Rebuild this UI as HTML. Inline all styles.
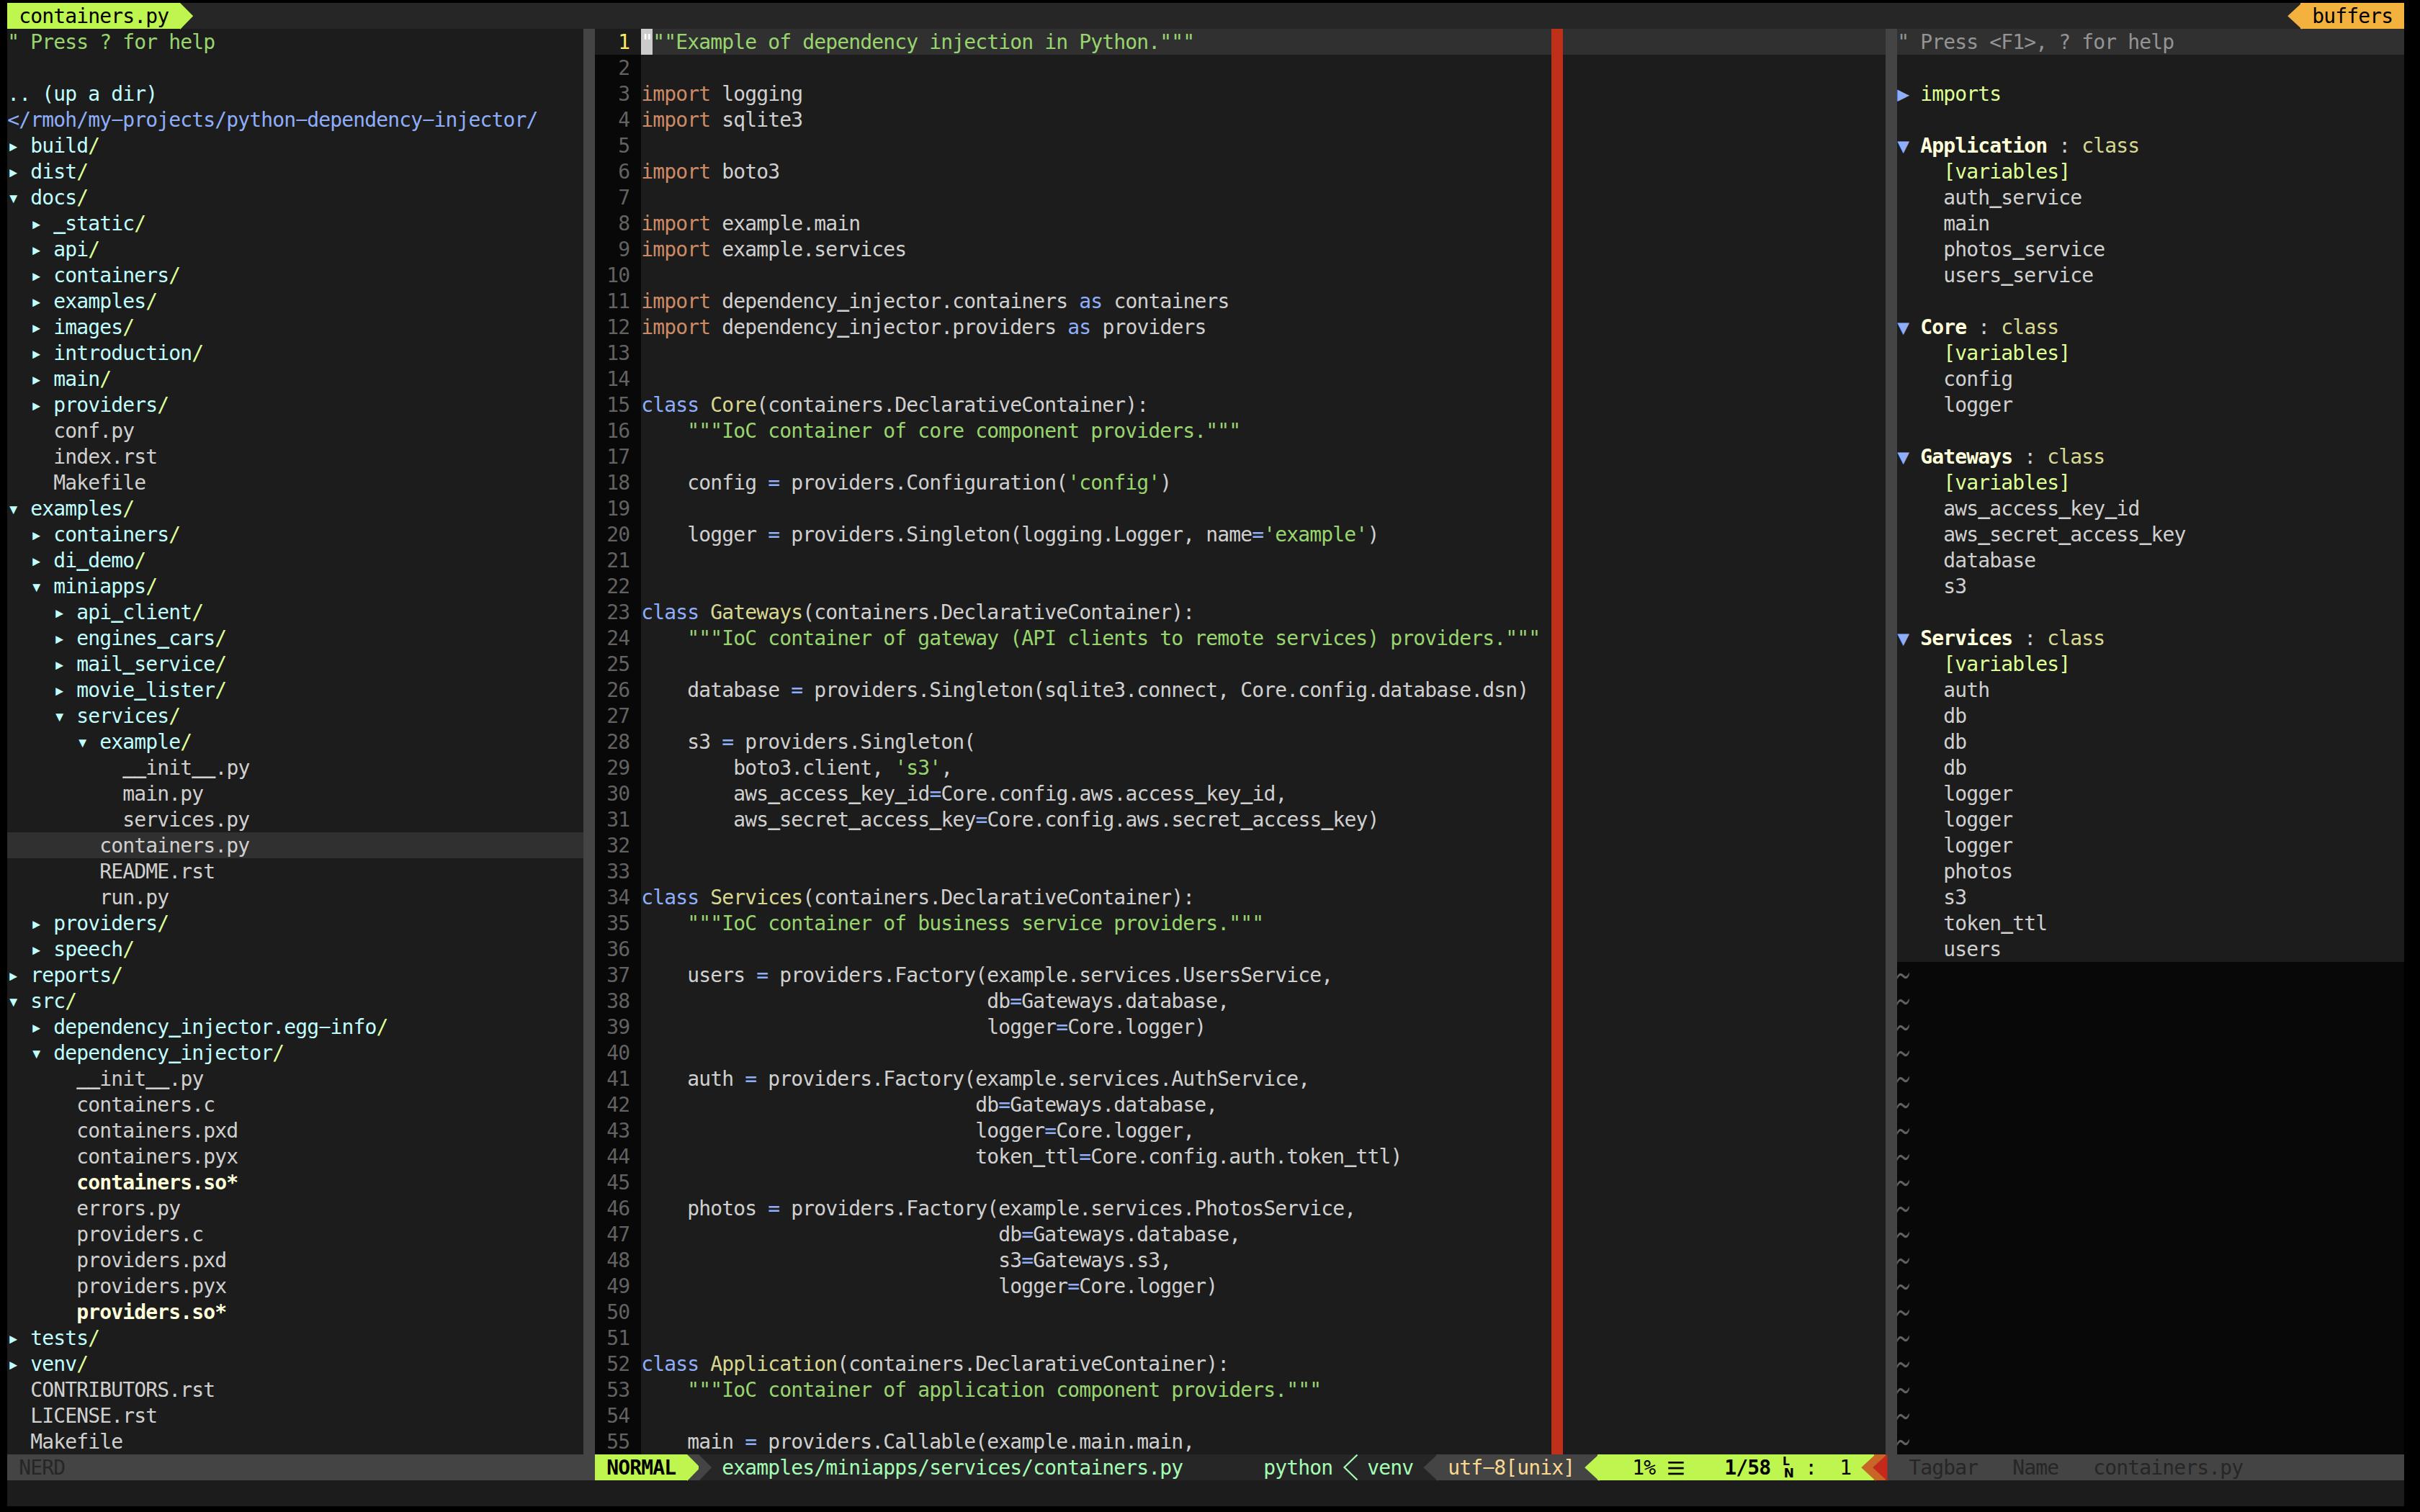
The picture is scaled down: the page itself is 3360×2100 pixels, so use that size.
<!DOCTYPE html>
<html lang="en"><head><meta charset="utf-8"><title>containers.py - vim</title>
<style>
html,body{margin:0;padding:0;background:#000;}
body{width:3360px;height:2100px;overflow:hidden;position:relative;}
#t{position:absolute;left:10px;top:4px;width:3328px;height:2088px;background:#1c1c1c;overflow:hidden;
 font-family:"DejaVu Sans Mono","Liberation Mono",monospace;font-size:28px;line-height:36px;letter-spacing:-0.8574px;color:#d0d0d0;-webkit-text-stroke:0;}
.b{position:absolute;display:block;overflow:visible}
pre.w{position:absolute;margin:0;padding:0;font:inherit;letter-spacing:inherit;white-space:pre;color:inherit}
.h,.g{color:#99d56f}.d{color:#c0fdfe}.s{color:#8faef9}.i{color:#dffe96}
.x,.t{color:#ffffdb;font-weight:bold}.p{color:#cc8b66}.y{color:#d7d791}.c{color:#949494}
pre.l,.l{color:#626262}.cn{color:#fcec64}.cc{color:#fff}
pre.k{color:#000}pre.bd{font-weight:bold}pre.ia{color:#262626}pre.tf{color:#a5fcb6}pre.bl{color:#f9d892}
.u,.hy{display:inline-block;font-style:normal}
.u{transform-origin:50% 33.4px;transform:translateY(-1.8px) scaleY(2.3)}
.hy{transform-origin:50% 20px;transform:translateY(-0.9px) scale(2.1,0.9)}
pre.tri{font-family:"DejaVu Sans",sans-serif;letter-spacing:0;font-size:24.4px;line-height:30px;transform-origin:0 0;transform:scaleX(1.18);-webkit-text-stroke:0.3px}
pre.ln1,pre.ln2{font-family:"DejaVu Sans",sans-serif;font-weight:bold;letter-spacing:0;line-height:20px;-webkit-text-stroke:0}
pre.ln1{font-size:15.4px}pre.ln2{font-size:16.9px}
.td{display:inline-block;font-style:normal;font-family:"DejaVu Sans Light","DejaVu Sans",sans-serif;font-weight:200;font-size:26.4px;letter-spacing:0;width:16px;margin-left:-3px;transform-origin:50% 18.3px;transform:scale(1,2.4);-webkit-text-stroke:0.3px}
</style></head>
<body><div id="t">
<div class="b" style="left:0px;top:0px;width:3328px;height:36px;background:#262626"></div>
<div class="b" style="left:800px;top:36px;width:16px;height:1980px;background:#444444"></div>
<div class="b" style="left:2608px;top:36px;width:16px;height:1980px;background:#444444"></div>
<div class="b" style="left:816px;top:72px;width:64px;height:1944px;background:#080808"></div>
<div class="b" style="left:880px;top:36px;width:1728px;height:36px;background:#303030"></div>
<div class="b" style="left:2144px;top:36px;width:16px;height:1980px;background:#be301a"></div>
<div class="b" style="left:880px;top:36px;width:16px;height:36px;background:#cccccc"></div>
<div class="b" style="left:2624px;top:36px;width:704px;height:36px;background:#303030"></div>
<div class="b" style="left:2624px;top:1332px;width:704px;height:684px;background:#080808"></div>
<div class="b" style="left:0px;top:1152px;width:800px;height:36px;background:#303030"></div>
<div class="b" style="left:0px;top:2016px;width:816px;height:36px;background:#444444"></div>
<div class="b" style="left:816px;top:2016px;width:128px;height:36px;background:#bef54e"></div>
<div class="b" style="left:944px;top:2016px;width:16px;height:36px;background:#444444"></div>
<div class="b" style="left:960px;top:2016px;width:1008px;height:36px;background:#262626"></div>
<div class="b" style="left:1968px;top:2016px;width:16px;height:36px;background:#262626"></div>
<div class="b" style="left:1984px;top:2016px;width:208px;height:36px;background:#444444"></div>
<div class="b" style="left:2192px;top:2016px;width:16px;height:36px;background:#444444"></div>
<div class="b" style="left:2208px;top:2016px;width:384px;height:36px;background:#bef54e"></div>
<div class="b" style="left:2592px;top:2016px;width:16px;height:36px;background:#c86627"></div>
<div class="b" style="left:2608px;top:2016px;width:720px;height:36px;background:#444444"></div>
<div class="b" style="left:0px;top:0px;width:240px;height:36px;background:#bef54e"></div>
<div class="b" style="left:3184px;top:0px;width:144px;height:36px;background:#f3b23e"></div>
<svg class="b" style="left:240px;top:0px" width="24" height="38" viewBox="0 0 24 38"><polygon points="0,0 18.2,18.2 0,37" fill="#bef54e"/></svg>
<svg class="b" style="left:3166px;top:0px" width="24" height="38" viewBox="0 0 24 38"><polygon points="20.5,-0.5 0.2,18.2 20.5,37" fill="#f3b23e"/></svg>
<svg class="b" style="left:944px;top:2016px" width="24" height="38" viewBox="0 0 24 38"><polygon points="0,0 18.2,18.2 0,37" fill="#bef54e"/></svg>
<svg class="b" style="left:960px;top:2016px" width="24" height="38" viewBox="0 0 24 38"><polygon points="0,0 18.2,18.2 0,37" fill="#444444"/></svg>
<svg class="b" style="left:1966px;top:2016px" width="24" height="38" viewBox="0 0 24 38"><polygon points="20.5,-0.5 0.2,18.2 20.5,37" fill="#444444"/></svg>
<svg class="b" style="left:2190px;top:2016px" width="24" height="38" viewBox="0 0 24 38"><polygon points="20.5,-0.5 0.2,18.2 20.5,37" fill="#bef54e"/></svg>
<svg class="b" style="left:2574px;top:2016px" width="24" height="38" viewBox="0 0 24 38"><polygon points="20.5,-0.5 0.2,18.2 20.5,37" fill="#c86627"/></svg>
<svg class="b" style="left:2590px;top:2016px" width="24" height="38" viewBox="0 0 24 38"><polygon points="20.5,-0.5 0.2,18.2 20.5,37" fill="#c5291c"/></svg>
<svg class="b" style="left:1855px;top:2016px" width="24" height="36" viewBox="0 0 24 36"><polyline points="19.5,0.5 1.5,18 19.5,35.5" fill="none" stroke="#a5fcb6" stroke-width="2.2"/></svg>
<pre class="w k" style="left:0.3px;top:0.9px"> containers.py</pre>
<pre class="w k" style="left:3184.3px;top:0.9px"> buffers</pre>
<pre class="w " style="left:0.3px;top:36.9px"><span class="h">" Press ? for help</span>

<span class="d">.. (up a dir)</span>
<span class="s">&lt;/rmoh/my<i class="hy">-</i>projects/python<i class="hy">-</i>dependency<i class="hy">-</i>injector/</span>
<span class="d">▸ build</span><span class="i">/</span>
<span class="d">▸ dist</span><span class="i">/</span>
<span class="d">▾ docs</span><span class="i">/</span>
  <span class="d">▸ <i class="u">_</i>static</span><span class="i">/</span>
  <span class="d">▸ api</span><span class="i">/</span>
  <span class="d">▸ containers</span><span class="i">/</span>
  <span class="d">▸ examples</span><span class="i">/</span>
  <span class="d">▸ images</span><span class="i">/</span>
  <span class="d">▸ introduction</span><span class="i">/</span>
  <span class="d">▸ main</span><span class="i">/</span>
  <span class="d">▸ providers</span><span class="i">/</span>
    conf.py
    index.rst
    Makefile
<span class="d">▾ examples</span><span class="i">/</span>
  <span class="d">▸ containers</span><span class="i">/</span>
  <span class="d">▸ di<i class="u">_</i>demo</span><span class="i">/</span>
  <span class="d">▾ miniapps</span><span class="i">/</span>
    <span class="d">▸ api<i class="u">_</i>client</span><span class="i">/</span>
    <span class="d">▸ engines<i class="u">_</i>cars</span><span class="i">/</span>
    <span class="d">▸ mail<i class="u">_</i>service</span><span class="i">/</span>
    <span class="d">▸ movie<i class="u">_</i>lister</span><span class="i">/</span>
    <span class="d">▾ services</span><span class="i">/</span>
      <span class="d">▾ example</span><span class="i">/</span>
          <i class="u">_</i><i class="u">_</i>init<i class="u">_</i><i class="u">_</i>.py
          main.py
          services.py
        containers.py
        README.rst
        run.py
  <span class="d">▸ providers</span><span class="i">/</span>
  <span class="d">▸ speech</span><span class="i">/</span>
<span class="d">▸ reports</span><span class="i">/</span>
<span class="d">▾ src</span><span class="i">/</span>
  <span class="d">▸ dependency<i class="u">_</i>injector.egg<i class="hy">-</i>info</span><span class="i">/</span>
  <span class="d">▾ dependency<i class="u">_</i>injector</span><span class="i">/</span>
      <i class="u">_</i><i class="u">_</i>init<i class="u">_</i><i class="u">_</i>.py
      containers.c
      containers.pxd
      containers.pyx
      <span class="x">containers.so*</span>
      errors.py
      providers.c
      providers.pxd
      providers.pyx
      <span class="x">providers.so*</span>
<span class="d">▸ tests</span><span class="i">/</span>
<span class="d">▸ venv</span><span class="i">/</span>
  CONTRIBUTORS.rst
  LICENSE.rst
  Makefile</pre>
<pre class="w l" style="left:816.3px;top:36.9px"><span class="cn">  1</span>
  2
  3
  4
  5
  6
  7
  8
  9
 10
 11
 12
 13
 14
 15
 16
 17
 18
 19
 20
 21
 22
 23
 24
 25
 26
 27
 28
 29
 30
 31
 32
 33
 34
 35
 36
 37
 38
 39
 40
 41
 42
 43
 44
 45
 46
 47
 48
 49
 50
 51
 52
 53
 54
 55</pre>
<pre class="w " style="left:880.3px;top:36.9px"><span class="cc">"</span><span class="g">""Example of dependency injection in Python."""</span>

<span class="p">import</span> logging
<span class="p">import</span> sqlite3

<span class="p">import</span> boto3

<span class="p">import</span> example.main
<span class="p">import</span> example.services

<span class="p">import</span> dependency<i class="u">_</i>injector.containers <span class="s">as</span> containers
<span class="p">import</span> dependency<i class="u">_</i>injector.providers <span class="s">as</span> providers


<span class="s">class</span> <span class="y">Core</span>(containers.DeclarativeContainer):
    <span class="g">"""IoC container of core component providers."""</span>

    config <span class="s">=</span> providers.Configuration(<span class="g">'config'</span>)

    logger <span class="s">=</span> providers.Singleton(logging.Logger, name<span class="s">=</span><span class="g">'example'</span>)


<span class="s">class</span> <span class="y">Gateways</span>(containers.DeclarativeContainer):
    <span class="g">"""IoC container of gateway (API clients to remote services) providers."""</span>

    database <span class="s">=</span> providers.Singleton(sqlite3.connect, Core.config.database.dsn)

    s3 <span class="s">=</span> providers.Singleton(
        boto3.client, <span class="g">'s3'</span>,
        aws<i class="u">_</i>access<i class="u">_</i>key<i class="u">_</i>id<span class="s">=</span>Core.config.aws.access<i class="u">_</i>key<i class="u">_</i>id,
        aws<i class="u">_</i>secret<i class="u">_</i>access<i class="u">_</i>key<span class="s">=</span>Core.config.aws.secret<i class="u">_</i>access<i class="u">_</i>key)


<span class="s">class</span> <span class="y">Services</span>(containers.DeclarativeContainer):
    <span class="g">"""IoC container of business service providers."""</span>

    users <span class="s">=</span> providers.Factory(example.services.UsersService,
                              db<span class="s">=</span>Gateways.database,
                              logger<span class="s">=</span>Core.logger)

    auth <span class="s">=</span> providers.Factory(example.services.AuthService,
                             db<span class="s">=</span>Gateways.database,
                             logger<span class="s">=</span>Core.logger,
                             token<i class="u">_</i>ttl<span class="s">=</span>Core.config.auth.token<i class="u">_</i>ttl)

    photos <span class="s">=</span> providers.Factory(example.services.PhotosService,
                               db<span class="s">=</span>Gateways.database,
                               s3<span class="s">=</span>Gateways.s3,
                               logger<span class="s">=</span>Core.logger)


<span class="s">class</span> <span class="y">Application</span>(containers.DeclarativeContainer):
    <span class="g">"""IoC container of application component providers."""</span>

    main <span class="s">=</span> providers.Callable(example.main.main,</pre>
<pre class="w " style="left:2624.3px;top:36.9px"><span class="c">" Press &lt;F1&gt;, ? for help</span>

<span class="s">▶</span> <span class="i">imports</span>

<span class="s">▼</span> <span class="t">Application</span> : <span class="y">class</span>
    <span class="i">[variables]</span>
    auth<i class="u">_</i>service
    main
    photos<i class="u">_</i>service
    users<i class="u">_</i>service

<span class="s">▼</span> <span class="t">Core</span> : <span class="y">class</span>
    <span class="i">[variables]</span>
    config
    logger

<span class="s">▼</span> <span class="t">Gateways</span> : <span class="y">class</span>
    <span class="i">[variables]</span>
    aws<i class="u">_</i>access<i class="u">_</i>key<i class="u">_</i>id
    aws<i class="u">_</i>secret<i class="u">_</i>access<i class="u">_</i>key
    database
    s3

<span class="s">▼</span> <span class="t">Services</span> : <span class="y">class</span>
    <span class="i">[variables]</span>
    auth
    db
    db
    db
    logger
    logger
    logger
    photos
    s3
    token<i class="u">_</i>ttl
    users
<span class="l"><i class="td">~</i></span>
<span class="l"><i class="td">~</i></span>
<span class="l"><i class="td">~</i></span>
<span class="l"><i class="td">~</i></span>
<span class="l"><i class="td">~</i></span>
<span class="l"><i class="td">~</i></span>
<span class="l"><i class="td">~</i></span>
<span class="l"><i class="td">~</i></span>
<span class="l"><i class="td">~</i></span>
<span class="l"><i class="td">~</i></span>
<span class="l"><i class="td">~</i></span>
<span class="l"><i class="td">~</i></span>
<span class="l"><i class="td">~</i></span>
<span class="l"><i class="td">~</i></span>
<span class="l"><i class="td">~</i></span>
<span class="l"><i class="td">~</i></span>
<span class="l"><i class="td">~</i></span>
<span class="l"><i class="td">~</i></span>
<span class="l"><i class="td">~</i></span></pre>
<pre class="w ia" style="left:0.3px;top:2016.9px"> NERD</pre>
<pre class="w k bd" style="left:816.3px;top:2016.9px"> NORMAL</pre>
<pre class="w tf" style="left:992.3px;top:2016.9px">examples/miniapps/services/containers.py</pre>
<pre class="w tf" style="left:1744.3px;top:2016.9px">python</pre>
<pre class="w tf" style="left:1888.3px;top:2016.9px">venv</pre>
<pre class="w bl" style="left:2000.3px;top:2016.9px">utf<i class="hy">-</i>8[unix]</pre>
<pre class="w k" style="left:2256.3px;top:2016.9px">1%</pre>
<pre class="w k tri" style="left:2304px;top:2020.9px">☰</pre>
<pre class="w k bd" style="left:2384.3px;top:2016.9px">1/58</pre>
<pre class="w k ln1" style="left:2465px;top:2016px">L</pre>
<pre class="w k ln2" style="left:2466.8px;top:2032.2px">N</pre>
<pre class="w k" style="left:2496.3px;top:2016.9px">:  1</pre>
<pre class="w ia" style="left:2640.3px;top:2016.9px">Tagbar</pre>
<pre class="w ia" style="left:2784.3px;top:2016.9px">Name</pre>
<pre class="w ia" style="left:2896.3px;top:2016.9px">containers.py</pre>
</div></body></html>
